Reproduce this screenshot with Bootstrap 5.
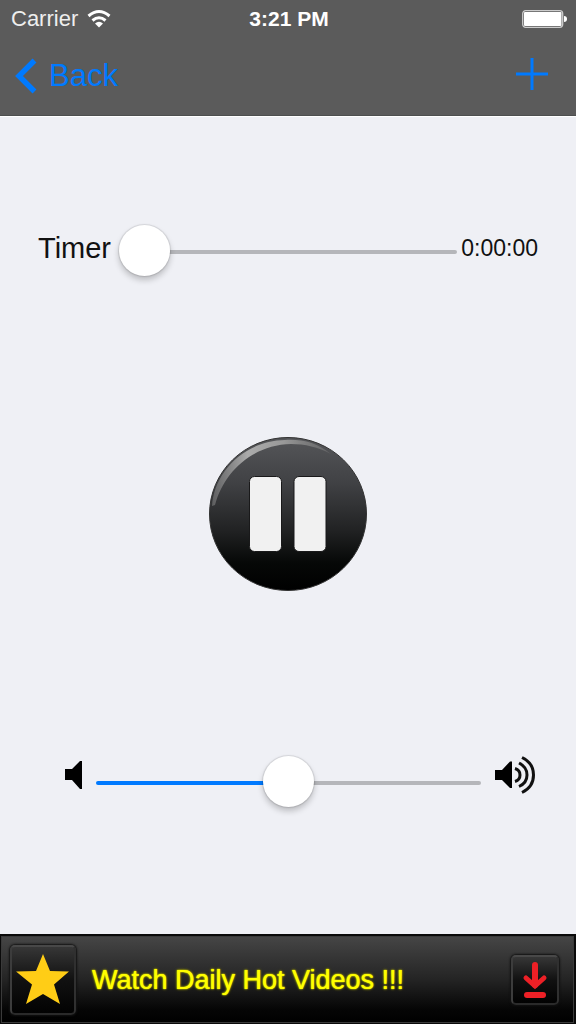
<!DOCTYPE html>
<html lang="en">
<head>
<meta charset="utf-8">
<meta name="viewport" content="width=device-width, initial-scale=1">
<title>Player</title>
<link href="https://cdn.jsdelivr.net/npm/bootstrap@5.3.0/dist/css/bootstrap.min.css" rel="stylesheet">
<style>
  body { font-family: "Liberation Sans", Arial, sans-serif; background: #eff0f5; color: #111; }
  svg { display: block; flex: none; }
  .topbar { background: #5b5b5b; border-bottom: 1px solid #4d4f4f; box-shadow: 0 1px 0 #fff; }
  .status { height: 37px; padding: 0 9px 0 11px; font-size: 22px; line-height: 37px; color: #eee; }
  .clock { font-size: 21px; color: #fff; }
  .tools { height: 78px; padding: 0 28px 0 15px; }
  .tools a { color: #007aff; font-size: 31px; line-height: 36px; gap: 12px; }
  .tools button { padding-bottom: 5px; }
  .stage { padding: 110px 38px 124px; }
  .timer-label { font-size: 29px; line-height: 36px; margin-bottom: 8px; }
  .timer-value { font-size: 23px; line-height: 28px; margin-bottom: 8px; }
  .play { margin-bottom: 6px; }
  .volume { padding: 0 3px 0 27px; gap: 14px; }
  .volume svg { margin-bottom: 16px; }
  .form-range { height: 52px; width: auto; min-width: 0; --fill: #b5b6ba; --at: 0%; }
  .form-range.level { --fill: #007aff; }
  .form-range::-webkit-slider-runnable-track {
    height: 4px; border-radius: 2px;
    background: linear-gradient(90deg, var(--fill) var(--at), #b5b6ba var(--at));
  }
  .form-range::-webkit-slider-thumb {
    width: 51px; height: 51px; margin-top: -25px; background: #fff; border: 0; border-radius: 50%;
    box-shadow: 0 0 1px 1px rgba(0,0,0,.1), 0 4px 6px rgba(0,0,0,.22);
  }
  .form-range::-webkit-slider-thumb:active { background: #fff; }
  .ad { height: 90px; padding: 0 15px 0 9px; color: #ff0; border: solid #0a0a0a; border-width: 2px 2px 1px 1px;
    background: linear-gradient(#464646, #242424 50%, #050505 85%, #000);
    box-shadow: inset 0 0 0 1px #3a3a3a; }
  .ad-text { font-size: 27px; line-height: 32px; text-shadow: 0 0 1px #ff0, 0 0 2px #aaa800, 0 0 3px #888600; }
  .ad-icon { border: 2px solid #3c3c3c; border-color: #484848 #303030 #2a2a2a #3c3c3c; border-radius: 5px; background: linear-gradient(#363636, #111 50%, #020202); box-shadow: 0 0 2px 1px #111; }
  .star-box { width: 66px; height: 70px; }
  .get-box { width: 48px; height: 50px; }
</style>
</head>
<body class="d-flex flex-column min-vh-100">
<header class="topbar">
  <div class="status row g-0">
    <div class="col d-flex align-items-center gap-2">
      <span>Carrier</span>
      <svg width="26" height="20" viewBox="0 0 26 20" fill="none" stroke="#fff" stroke-width="3" role="img" aria-label="Wi-Fi">
        <path d="M2.500 7Q13-2 23.500 7M6.500 11.500Q13 6 19.500 11.500"/><path d="M9 14.500Q13 11 17 14.500L13 18.500Z" fill="#fff" stroke="none"/>
      </svg>
    </div>
    <div class="col-auto clock fw-bold">3:21 PM</div>
    <div class="col d-flex align-items-center justify-content-end">
      <svg width="45" height="18" viewBox="0 0 45 18" role="img" aria-label="Battery full">
        <rect x=".7" y=".7" width="40" height="16.600" rx="3" fill="none" stroke="#ccc" stroke-width="1.300"/>
        <rect x="2" y="2" width="37.500" height="14" rx="1" fill="#fff"/><path d="M42 6Q45 6 45 9T42 12Z" fill="#fff"/>
      </svg>
    </div>
  </div>
  <nav class="tools d-flex align-items-center justify-content-between">
    <a href="#" class="d-flex align-items-center text-decoration-none">
      <svg width="22" height="36" viewBox="0 0 22 36" fill="none" stroke="#007aff" stroke-width="5.500" aria-hidden="true"><path d="M19.500 2.500L4 18L19.500 33.500"/></svg>
      <span>Back</span>
    </a>
    <button type="button" class="btn border-0 px-0 pt-0" aria-label="Add">
      <svg width="32" height="32" viewBox="0 0 32 32" stroke="#007aff" stroke-width="3" aria-hidden="true"><path d="M0 16H32M16 0V32"/></svg>
    </button>
  </nav>
</header>

<main class="stage flex-grow-1 d-flex flex-column justify-content-between">
  <div class="d-flex align-items-center">
    <label class="timer-label" for="timer">Timer</label>
    <input class="form-range flex-grow-1 ms-2 me-1" id="timer" type="range" min="0" max="100" value="0">
    <output class="timer-value" for="timer">0:00:00</output>
  </div>

  <button type="button" class="play btn border-0 p-0 align-self-center" aria-label="Pause">
    <svg width="158" height="154" viewBox="0 0 158 154" aria-hidden="true">
      <defs>
        <linearGradient id="disc" x2="0" y2="1"><stop stop-color="#555659"/><stop offset=".3" stop-color="#404144"/><stop offset=".6" stop-color="#222324"/><stop offset=".82" stop-color="#060807"/><stop offset="1" stop-color="#000"/></linearGradient>
        <linearGradient id="shine" x2="1" y2="0"><stop stop-color="#888" stop-opacity=".5"/><stop offset=".3" stop-color="#ababab"/><stop offset=".6" stop-color="#999"/><stop offset="1" stop-color="#777" stop-opacity=".5"/></linearGradient>
      </defs>
      <ellipse cx="79" cy="77" rx="78.500" ry="76.500" fill="url(#disc)" stroke="#333" stroke-width="1"/>
      <path d="M3 69C5 36 34 4 76 3C94 2 108 6 122 17C109 10 96 7 82 7C44 8 15 34 6 68Z" fill="url(#shine)"/>
      <g fill="#f1f1f1" stroke="#19191a"><rect x="40.500" y="39.500" width="32" height="75" rx="5"/><rect x="85" y="39.500" width="32" height="75" rx="5"/></g>
    </svg>
  </button>

  <div class="volume d-flex align-items-center">
    <svg width="17" height="28" viewBox="0 0 17 28" aria-hidden="true"><path d="M0 8H7L15 0H17V28H15L7 19H0Z"/></svg>
    <input class="form-range level flex-grow-1" id="volume" type="range" min="0" max="100" value="50" style="--at:50%" aria-label="Volume">
    <svg width="40" height="38" viewBox="0 0 40 38" fill="none" stroke="#111" stroke-width="3" aria-hidden="true"><path d="M0 14H7L15 5.500H17V32H15L7 24H0Z" fill="#000" stroke="none"/><path d="M20 12.500Q25 14 25 19T20 25.500M24 7Q32 11 32 19T24 30.500M27 1.500Q38.500 7 38.500 19T27 36.500"/></svg>
  </div>
</main>

<footer class="ad d-flex align-items-center">
  <div class="ad-icon star-box d-flex align-items-center justify-content-center">
    <svg width="54" height="51" viewBox="0 0 54 51" aria-hidden="true"><path d="M27 0L34 17L53 17.500L38 30.500L44 50L27 40L10 50L16 30.500L0 17.500L20 17Z" fill="#ffcd16"/></svg>
  </div>
  <a href="#" class="ad-text flex-grow-1 ms-3 text-decoration-none text-reset">Watch Daily Hot Videos !!!</a>
  <button type="button" class="ad-icon get-box btn p-0 d-flex align-items-center justify-content-center" aria-label="Download">
    <svg width="26" height="38" viewBox="0 0 26 38" stroke="#ed2026" fill="none" stroke-linecap="round" aria-hidden="true"><path d="M13 4V24" stroke-width="6"/><path d="M4 17L13 25L22 17" stroke-width="5"/><path d="M5 34H21" stroke-width="6"/></svg>
  </button>
</footer>
<script src="https://cdn.jsdelivr.net/npm/bootstrap@5.3.0/dist/js/bootstrap.bundle.min.js"></script>
</body>
</html>
